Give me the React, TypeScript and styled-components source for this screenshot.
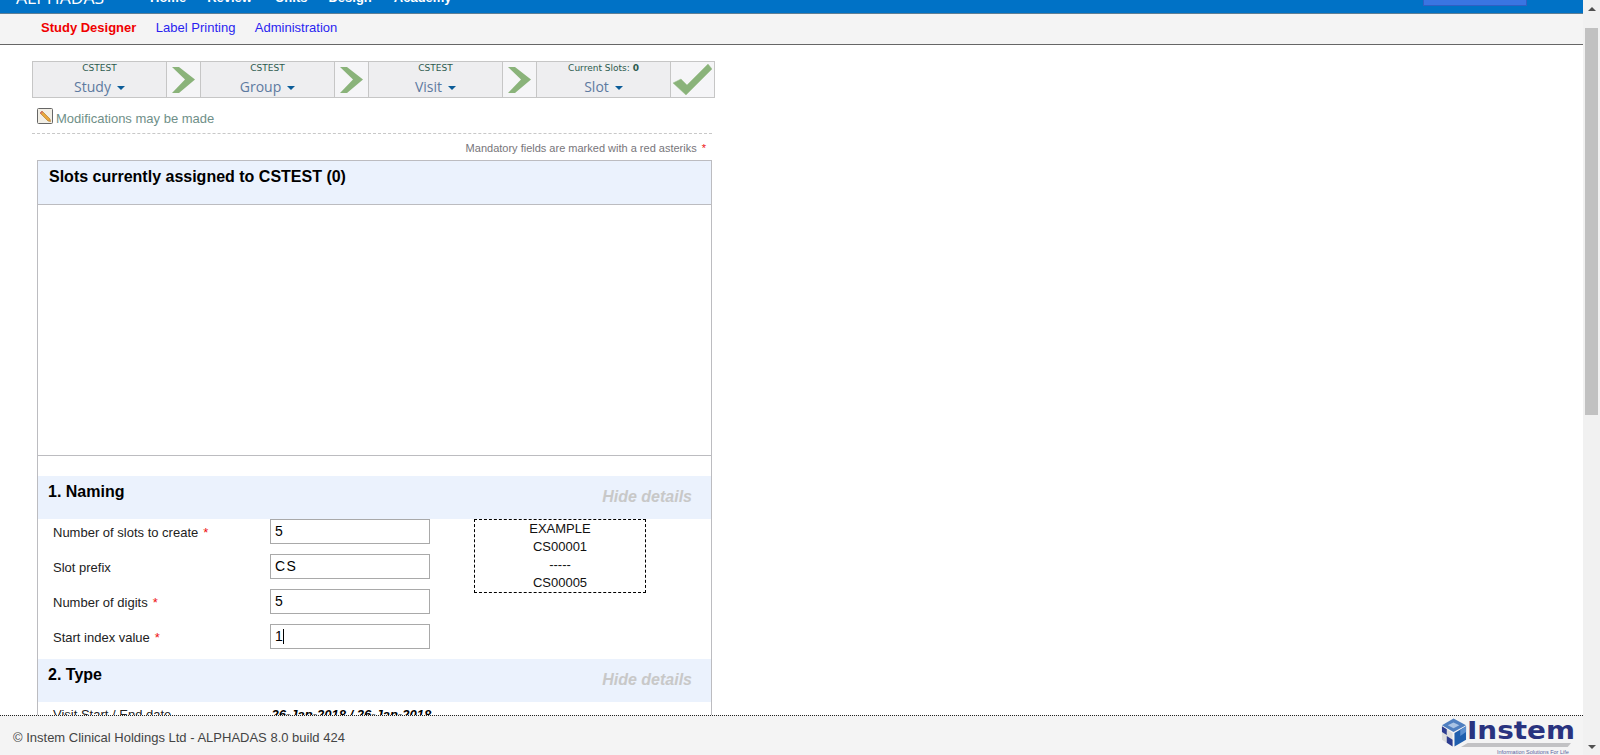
import React from "react";
import styled, { createGlobalStyle } from "styled-components";

const GlobalStyle = createGlobalStyle`
  html, body {
    margin: 0;
    height: 100%;
    overflow: hidden;
    font-family: "Liberation Sans", Arial, sans-serif;
    background: #fff;
  }
`;

const Page = styled.div`
  display: flex;
  width: 1600px;
  height: 755px;
  overflow: hidden;
`;

const Main = styled.div`
  display: flex;
  flex-direction: column;
  width: 1583px;
  height: 755px;
`;

const TopBar = styled.header`
  flex: none;
  display: flex;
  align-items: flex-end;
  height: 13px;
  padding-left: 16px;
  overflow: hidden;
  background: #0072c6;
  border-bottom: 1px solid #5f7f95;
  color: #fff;
`;

const Brand = styled.div`
  width: 134px;
  margin-bottom: 5px;
  font: 17.5px/22px "Open Sans", sans-serif;
`;

const TopLink = styled.a<{ $gap: number }>`
  margin-right: ${(p) => p.$gap}px;
  margin-bottom: 8px;
  font: bold 13px/15px "Liberation Sans", Arial, sans-serif;
`;

const AccountButton = styled.div`
  width: 104px;
  height: 30px;
  box-sizing: border-box;
  margin: 0 56px 7px auto;
  background: #3a75e2;
  border: 1px solid #2f5fc4;
`;

const SubNav = styled.nav`
  flex: none;
  display: flex;
  align-items: center;
  gap: 19.5px;
  height: 31px;
  box-sizing: border-box;
  padding: 0 0 3px 41px;
  background: #f4f4f4;
  border-bottom: 1px solid #666;
`;

const SubLink = styled.a<{ $active?: boolean }>`
  font-size: 13px;
  font-weight: ${(p) => (p.$active ? "bold" : "normal")};
  color: ${(p) => (p.$active ? "#f00000" : "#2a1ff0")};
`;

const Content = styled.main`
  flex: 1;
  min-height: 0;
  overflow: hidden;
  padding: 16px 0 0 32px;
`;

const Stepper = styled.div`
  display: flex;
  width: 683px;
  height: 37px;
  box-sizing: border-box;
  border: 1px solid #c6c6c6;
`;

const StepCell = styled.div`
  width: 133px;
  background: #eeeef0;
  border-right: 1px solid #c6c6c6;
  text-align: center;
`;

const StepCaption = styled.div`
  margin-top: 1px;
  font: 9px/11px "DejaVu Sans", sans-serif;
  color: #2c5a4e;
`;

const StepName = styled.div`
  margin-top: 4px;
  font: 14px/18px "Open Sans", sans-serif;
  color: #5d7aa0;
`;

const Caret = styled.span`
  display: inline-block;
  margin-left: 6px;
  vertical-align: 2px;
  border-left: 4px solid transparent;
  border-right: 4px solid transparent;
  border-top: 4px solid #0b5c98;
`;

const StepArrow = styled.div<{ $last?: boolean }>`
  display: flex;
  align-items: center;
  justify-content: center;
  width: 33px;
  flex: ${(p) => (p.$last ? "1" : "none")};
  background: #f5f5f7;
  border-right: ${(p) => (p.$last ? "none" : "1px solid #c6c6c6")};
`;

const Status = styled.div`
  display: flex;
  align-items: flex-start;
  gap: 3px;
  width: 680px;
  height: 25px;
  margin-top: 10px;
  padding-left: 5px;
  box-sizing: border-box;
  font-size: 13px;
  line-height: 16px;
  color: #6f8f88;
`;

const StatusText = styled.span`
  margin-top: 3px;
`;

const Rule = styled.div`
  width: 680px;
  border-bottom: 1px dashed #c8c8c8;
`;

const Mandatory = styled.div`
  width: 674px;
  margin-top: 7px;
  text-align: right;
  font-size: 11px;
  line-height: 14px;
  color: #77757a;
`;

const Star = styled.span`
  color: #ee1111;
  margin-left: 5px;
`;

const Panel = styled.section`
  width: 675px;
  margin: 5px 0 0 5px;
  box-sizing: border-box;
  border: 1px solid #bcbcc0;
`;

const PanelHead = styled.div`
  height: 44px;
  padding: 7px 0 0 11px;
  box-sizing: border-box;
  background: #ebf2fd;
  border-bottom: 1px solid #bcbcc0;
  font-size: 16px;
  font-weight: bold;
  line-height: 18px;
  color: #000;
`;

const EmptyList = styled.div`
  height: 250px;
  margin-bottom: 20px;
  border-bottom: 1px solid #bcbcc0;
`;

const SectionHead = styled.div`
  display: flex;
  justify-content: space-between;
  height: 43px;
  padding: 7px 19px 0 10px;
  box-sizing: border-box;
  background: #ebf2fd;
`;

const SectionTitle = styled.h3`
  margin: 0;
  font-size: 16px;
  line-height: 18px;
  font-weight: bold;
  color: #000;
`;

const HideLink = styled.a`
  margin-top: 5px;
  font-size: 16px;
  line-height: 18px;
  font-weight: bold;
  font-style: italic;
  color: #c8c8c8;
`;

const SectionBody = styled.div`
  display: flex;
  align-items: flex-start;
  height: 140px;
  padding-left: 15px;
`;

const FieldList = styled.div`
  display: grid;
  grid-template-columns: 217px 160px;
  grid-auto-rows: 25px;
  row-gap: 10px;
  align-items: center;
`;

const Label = styled.label`
  font-size: 13px;
  color: #222;
  position: relative;
  top: 1px;
`;

const LabelStar = styled.span`
  color: #ee1111;
  margin-left: 5px;
`;

const FieldWrap = styled.div`
  position: relative;
  height: 25px;
`;

const Field = styled.input`
  display: block;
  width: 160px;
  height: 25px;
  box-sizing: border-box;
  padding: 0 4px 2px;
  border: 1px solid #a9a9a9;
  outline: none;
  border-radius: 0;
  font: 14px "Liberation Sans", Arial, sans-serif;
  letter-spacing: 1.4px;
  color: #000;
`;

const TextCaret = styled.span`
  position: absolute;
  left: 13px;
  top: 5px;
  width: 1px;
  height: 15px;
  background: #000;
`;

const ExampleBox = styled.div`
  width: 172px;
  height: 74px;
  margin-left: 44px;
  box-sizing: border-box;
  border: 1px dashed #000;
  text-align: center;
  font-size: 13px;
  line-height: 18px;
  color: #111;
`;

const InfoRow = styled.div`
  display: grid;
  grid-template-columns: 217px 1fr;
  padding: 5px 0 0 15px;
  font-size: 13px;
  line-height: 16px;
  color: #222;
`;

const InfoValue = styled.b`
  font-style: italic;
  margin-left: 1.5px;
  color: #000;
`;

const Footer = styled.footer`
  flex: none;
  display: flex;
  justify-content: space-between;
  align-items: flex-start;
  height: 40px;
  box-sizing: border-box;
  border-top: 1px dotted #222;
  background: #f4f4f4;
`;

const Copyright = styled.div`
  padding: 14px 0 0 13px;
  font-size: 13px;
  line-height: 16px;
  color: #444;
`;

const Logo = styled.div`
  display: flex;
  width: 142px;
  padding-top: 2px;
`;

const LogoCube = styled.svg`
  flex: none;
  width: 26px;
  height: 30px;
`;

const LogoText = styled.div`
  width: 110px;
  color: #29337f;
`;

const LogoWord = styled.div`
  font: bold 24px/24px "DejaVu Sans", sans-serif;
  margin-top: 1px;
  white-space: nowrap;
  transform: scaleX(1.16);
  transform-origin: left center;
`;

const LogoSwoosh = styled.div`
  width: 110px;
  height: 4px;
  margin-left: -6px;
  background: #c2c2c4;
  clip-path: polygon(6% 0, 100% 0, 97% 100%, 0 100%);
`;

const LogoTag = styled.div`
  margin: 2px 0 0 30px;
  font-size: 5.5px;
  line-height: 6px;
  white-space: nowrap;
  color: #5a64a0;
`;

const Scrollbar = styled.div`
  flex: none;
  display: flex;
  flex-direction: column;
  align-items: center;
  width: 17px;
  height: 755px;
  background: #f1f1f1;
`;

const ScrollButton = styled.div<{ $down?: boolean }>`
  flex: none;
  height: 17px;
  display: flex;
  align-items: center;
  justify-content: center;
  &::before {
    content: "";
    border-left: 4px solid transparent;
    border-right: 4px solid transparent;
    ${(p) => (p.$down ? "border-top: 4px solid #505050;" : "border-bottom: 4px solid #505050;")}
  }
`;

const ScrollThumb = styled.div`
  width: 13px;
  height: 387px;
  margin-top: 11px;
  background: #c1c1c1;
`;

const ScrollSpace = styled.div`
  flex: 1;
`;

const Chevron = () => (
  <svg width="23" height="26" viewBox="0 0 23 26">
    <polygon points="0,0 7,0 23,12.5 7,26 0,26 13,12.5" fill="#8ab37a" />
  </svg>
);

const Check = () => (
  <svg width="39" height="32" viewBox="0 0 39 32">
    <polygon points="0,19 8,15 14,21 35,0 39,5 13,31" fill="#8ab37a" stroke="#9cc08e" strokeWidth="0.5" />
  </svg>
);

const PencilIcon = () => (
  <svg width="16" height="16" viewBox="0 0 16 16">
    <rect x="0.5" y="0.5" width="15" height="15" rx="1" fill="#f2efe6" stroke="#666" />
    <polygon points="3,5 5,3 13,11 13.5,13.5 11,13" fill="#e9a83a" stroke="#a5702a" strokeWidth="0.6" />
    <polygon points="3,5 5,3 6,4 4,6" fill="#d8706a" />
  </svg>
);

const steps = [
  { caption: "CSTEST", name: "Study" },
  { caption: "CSTEST", name: "Group" },
  { caption: "CSTEST", name: "Visit" },
  { caption: "Current Slots:", count: "0", name: "Slot" },
];

const fields = [
  { label: "Number of slots to create", value: "5", required: true },
  { label: "Slot prefix", value: "CS" },
  { label: "Number of digits", value: "5", required: true },
  { label: "Start index value", value: "1", required: true, focused: true },
];

export default function App() {
  return (
    <Page>
      <GlobalStyle />
      <Main>
        <TopBar>
          <Brand>ALPHADAS</Brand>
          <TopLink $gap={21}>Home</TopLink>
          <TopLink $gap={23}>Review</TopLink>
          <TopLink $gap={21}>Units</TopLink>
          <TopLink $gap={22}>Design</TopLink>
          <TopLink $gap={0}>Academy</TopLink>
          <AccountButton />
        </TopBar>
        <SubNav>
          <SubLink $active>Study Designer</SubLink>
          <SubLink>Label Printing</SubLink>
          <SubLink>Administration</SubLink>
        </SubNav>
        <Content>
          <Stepper>
            {steps.map((s, i) => (
              <React.Fragment key={s.name}>
                <StepCell>
                  <StepCaption>
                    {s.caption} {s.count && <b>{s.count}</b>}
                  </StepCaption>
                  <StepName>
                    {s.name}
                    <Caret />
                  </StepName>
                </StepCell>
                <StepArrow $last={i === steps.length - 1}>
                  {i === steps.length - 1 ? <Check /> : <Chevron />}
                </StepArrow>
              </React.Fragment>
            ))}
          </Stepper>
          <Status>
            <PencilIcon />
            <StatusText>Modifications may be made</StatusText>
          </Status>
          <Rule />
          <Mandatory>
            Mandatory fields are marked with a red asteriks<Star>*</Star>
          </Mandatory>
          <Panel>
            <PanelHead>Slots currently assigned to CSTEST (0)</PanelHead>
            <EmptyList />
            <SectionHead>
              <SectionTitle>1. Naming</SectionTitle>
              <HideLink>Hide details</HideLink>
            </SectionHead>
            <SectionBody>
              <FieldList>
                {fields.map((f) => (
                  <React.Fragment key={f.label}>
                    <Label>
                      {f.label}
                      {f.required && <LabelStar>*</LabelStar>}
                    </Label>
                    <FieldWrap>
                      <Field readOnly defaultValue={f.value} />
                      {f.focused && <TextCaret />}
                    </FieldWrap>
                  </React.Fragment>
                ))}
              </FieldList>
              <ExampleBox>
                EXAMPLE
                <br />
                CS00001
                <br />
                -----
                <br />
                CS00005
              </ExampleBox>
            </SectionBody>
            <SectionHead>
              <SectionTitle>2. Type</SectionTitle>
              <HideLink>Hide details</HideLink>
            </SectionHead>
            <InfoRow>
              <span>Visit Start / End date</span>
              <InfoValue>26-Jan-2018 / 26-Jan-2018</InfoValue>
            </InfoRow>
          </Panel>
        </Content>
        <Footer>
          <Copyright>© Instem Clinical Holdings Ltd - ALPHADAS 8.0 build 424</Copyright>
          <Logo>
            <LogoCube viewBox="0 0 27 30">
              <polygon points="13,0 26,7 13,14 1,7" fill="#4f7fc0" />
              <polygon points="13,4 19,7 13,10 7,7" fill="#a9c3e4" />
              <polygon points="1,8 12,15 12,29 1,22" fill="#dcdcdc" />
              <polygon points="1,8 6,11 6,17 1,14" fill="#2c3c90" />
              <polygon points="6,18 12,22 12,29 6,25" fill="#2c3c90" />
              <polygon points="14,15 26,8 26,22 14,29" fill="#1f5fae" />
              <polygon points="20,12 26,8 26,14 20,18" fill="#5b8fd0" />
            </LogoCube>
            <LogoText>
              <LogoWord>Instem</LogoWord>
              <LogoSwoosh />
              <LogoTag>Information Solutions For Life</LogoTag>
            </LogoText>
          </Logo>
        </Footer>
      </Main>
      <Scrollbar>
        <ScrollButton />
        <ScrollThumb />
        <ScrollSpace />
        <ScrollButton $down />
      </Scrollbar>
    </Page>
  );
}
